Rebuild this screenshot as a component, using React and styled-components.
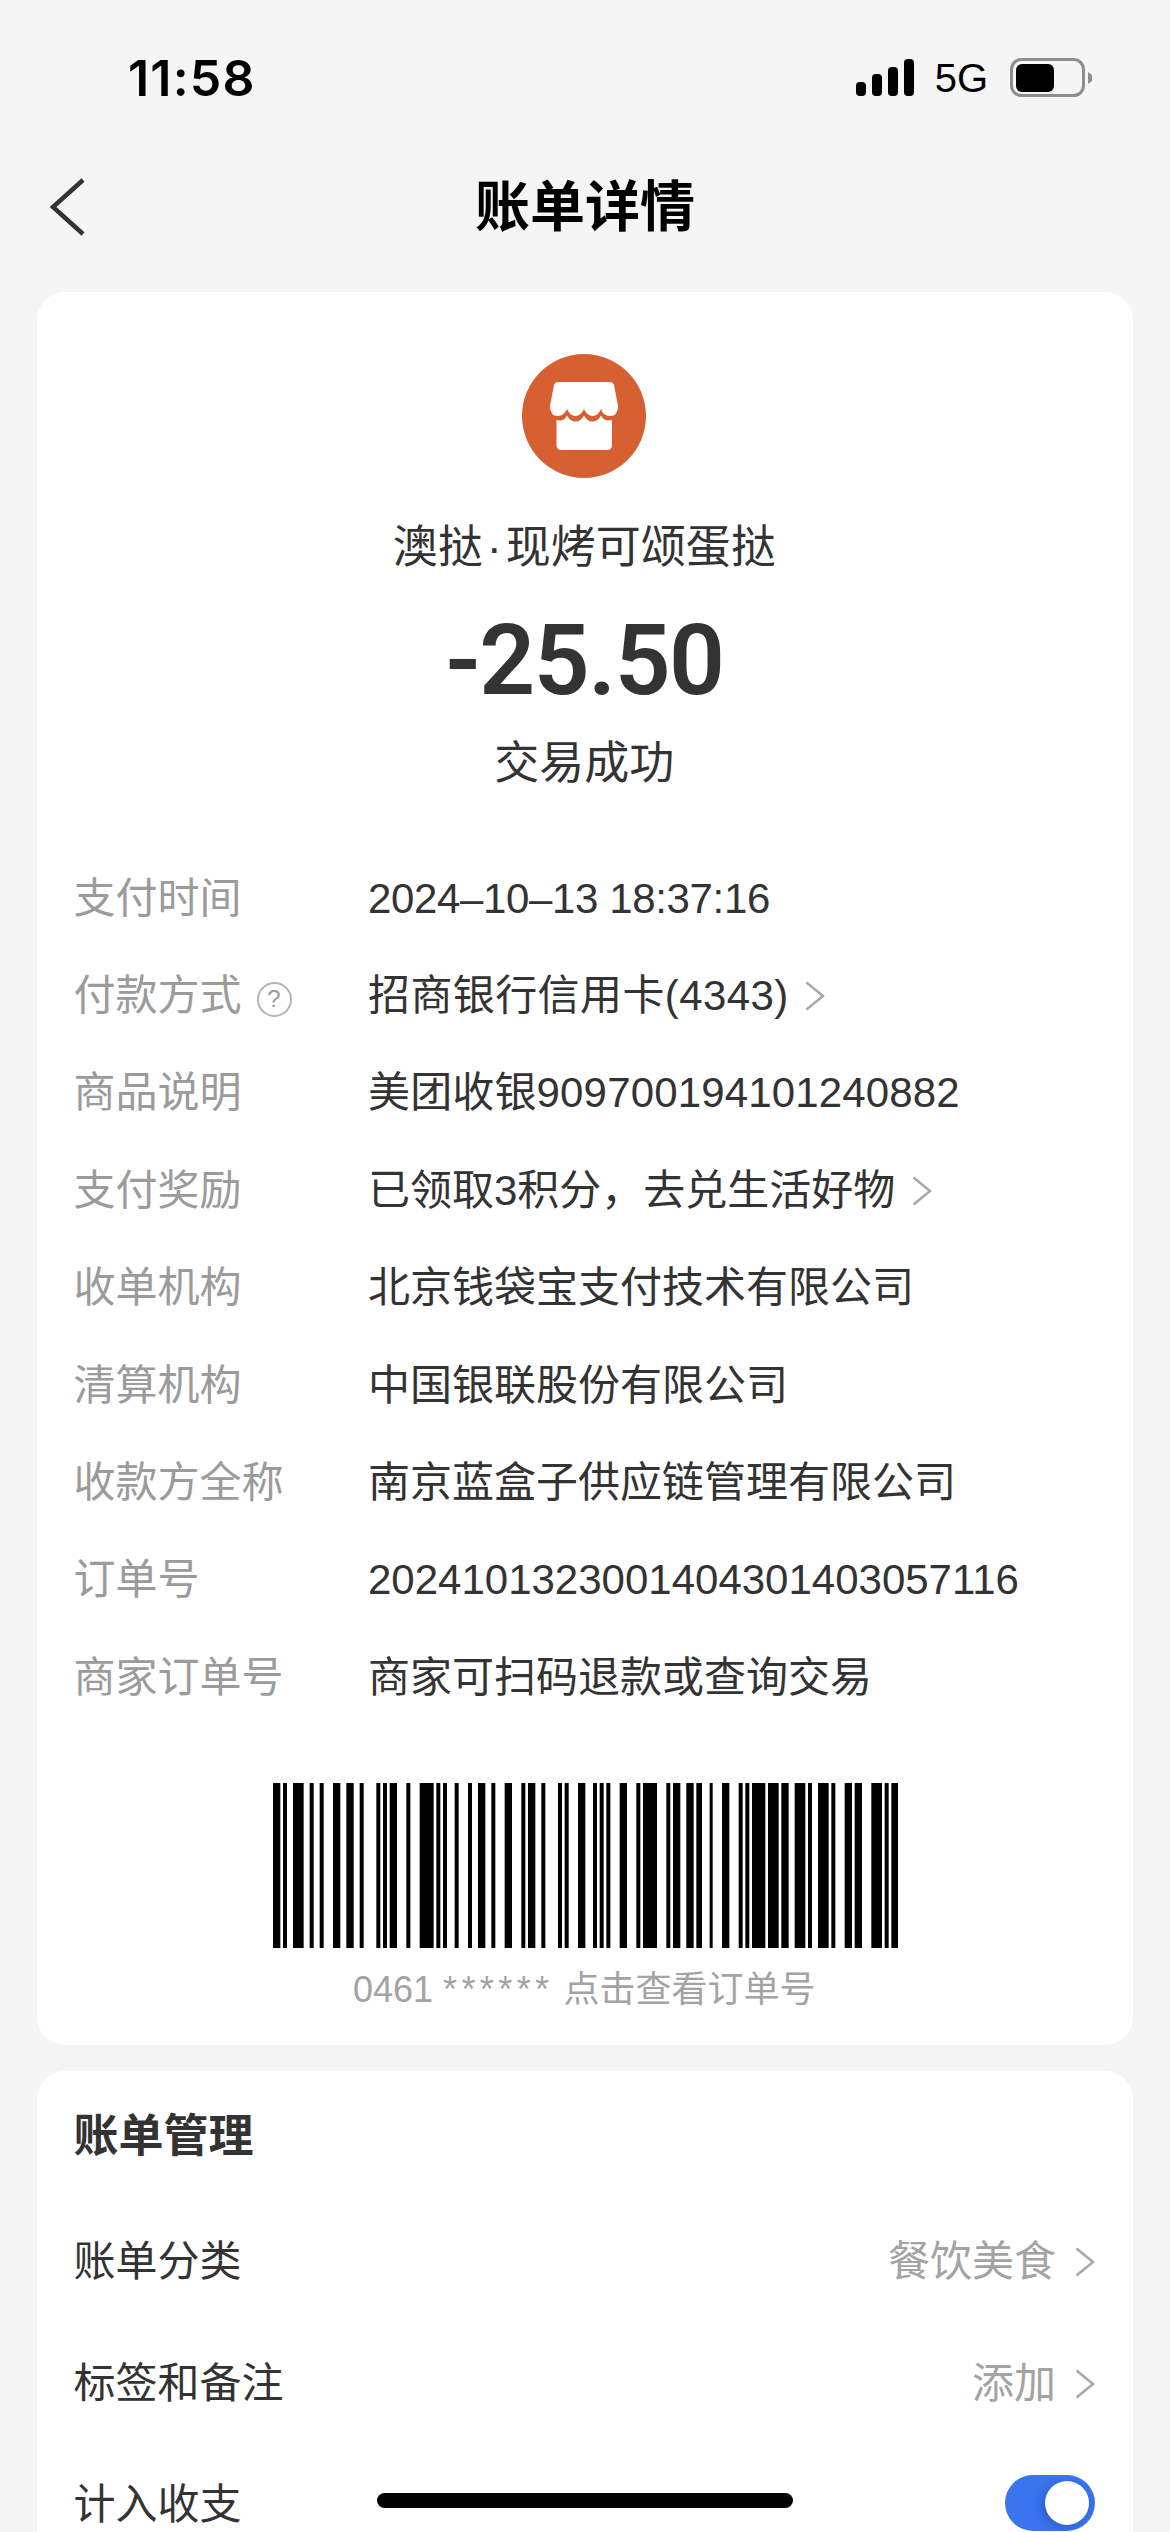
import React from "react";
import styled, { createGlobalStyle } from "styled-components";

const SANS = `"Liberation Sans", "Noto Sans CJK SC", sans-serif`;

const Global = createGlobalStyle`
  html, body { margin: 0; padding: 0; background: #f5f5f5; }
  body { font-family: ${SANS}; }
`;

const Page = styled.div`
  position: relative;
  width: 1170px;
  height: 2532px;
  overflow: hidden;
  background: #f5f5f5;
`;

const StatusBar = styled.div`
  display: flex;
  align-items: center;
  justify-content: space-between;
  height: 156px;
  padding: 0 77px 0 128px;
  box-sizing: border-box;
`;

const Clock = styled.span`
  font-family: Inter, sans-serif;
  font-size: 50px;
  font-weight: 600;
  letter-spacing: 1.2px;
  color: #000;
`;

const StatusIcons = styled.div`
  display: flex;
  align-items: center;
`;

const Signal = styled.svg`
  display: block;
  width: 58px;
  height: 38px;
`;

const Network = styled.span`
  margin: 0 22px 0 21px;
  font-size: 40px;
  line-height: 40px;
  color: #000;
`;

const BatteryIcon = styled.svg`
  display: block;
  width: 83px;
  height: 40px;
`;

const NavBar = styled.div`
  display: grid;
  grid-template-columns: 1fr auto 1fr;
  align-items: center;
  height: 102px;
  padding: 0 49px;
`;

const BackIcon = styled.svg`
  display: block;
  width: 37px;
  height: 60px;
`;

const Title = styled.h1`
  margin: 0;
  font-size: 55px;
  line-height: 70px;
  font-weight: 700;
  color: #000;
`;

const Card = styled.section`
  margin: ${(p) => p.$top}px 37px 0;
  padding: ${(p) => p.$padTop}px 38px ${(p) => p.$padBottom}px 36.5px;
  background: #fff;
  border-radius: 28px;
`;

const Hero = styled.div`
  display: flex;
  flex-direction: column;
  align-items: center;
`;

const Avatar = styled.div`
  display: flex;
  align-items: center;
  justify-content: center;
  width: 124px;
  height: 124px;
  border-radius: 50%;
  background: #d66031;
`;

const StoreIcon = styled.svg`
  display: block;
  width: 68px;
  height: 68px;
`;

const Merchant = styled.div`
  margin-top: 40px;
  font-size: 45px;
  line-height: 60px;
  color: #333;
`;

const Dot = styled.span`
  margin: 0 4px;
`;

const Amount = styled.div`
  margin-top: 28px;
  font-family: Roboto, sans-serif;
  font-weight: 600;
  font-size: 98px;
  letter-spacing: -1.5px;
  line-height: 110px;
  color: #333;
`;

const Outcome = styled.div`
  margin-top: 18px;
  font-size: 45px;
  line-height: 60px;
  color: #333;
`;

const Details = styled.div`
  margin-top: 56px;
`;

const DetailRow = styled.div`
  display: grid;
  grid-template-columns: 294.5px 1fr;
  align-items: center;
  height: 97.4px;
  font-size: 42px;
  line-height: 50px;
`;

const Label = styled.div`
  display: flex;
  align-items: center;
  color: #9b9b9b;
`;

const Value = styled.div`
  display: flex;
  align-items: center;
  color: #333;
  white-space: nowrap;
  letter-spacing: ${(p) => p.$track || 0}px;
`;

const Hint = styled.span`
  display: flex;
  align-items: center;
  justify-content: center;
  width: 35px;
  height: 35px;
  margin: 6px 0 0 15px;
  box-sizing: border-box;
  border: 2.5px solid #b4b4b4;
  border-radius: 50%;
  font-size: 24px;
  line-height: 28px;
  color: #9b9b9b;
`;

const Chevron = styled.svg`
  display: block;
  flex: none;
  width: 20px;
  height: 30px;
  margin-left: ${(p) => p.$gap}px;
`;

const Barcode = styled.svg`
  display: block;
  width: 628px;
  height: 165px;
  margin: 56px auto 0;
`;

const Caption = styled.div`
  margin-top: 17px;
  text-align: center;
  font-size: 36px;
  line-height: 50px;
  color: #a3a3a3;
`;

const Stars = styled.span`
  letter-spacing: 4.4px;
`;

const SectionTitle = styled.h2`
  margin: 0 0 35px;
  font-size: 45px;
  line-height: 60px;
  font-weight: 700;
  color: #333;
`;

const ManageRow = styled.div`
  display: flex;
  align-items: center;
  justify-content: space-between;
  height: 121.5px;
  font-size: 42px;
  line-height: 50px;
  color: #333;
`;

const ManageValue = styled.div`
  display: flex;
  align-items: center;
  color: #a3a3a3;
`;

const Toggle = styled.div`
  position: relative;
  width: 90px;
  height: 56px;
  margin-top: -4px;
  border-radius: 28px;
  background: #3a74ee;
  &::after {
    content: "";
    position: absolute;
    top: 6px;
    right: 6px;
    width: 44px;
    height: 44px;
    border-radius: 50%;
    background: #fff;
    box-shadow: -3px 2px 8px rgba(20, 50, 120, 0.35);
  }
`;

const HomeIndicator = styled.div`
  position: absolute;
  left: 377px;
  top: 2493px;
  width: 416px;
  height: 15px;
  border-radius: 8px;
  background: #000;
`;

const BARS = [
  [10, 30], [40, 50], [70, 100], [120, 130], [150, 160], [190, 210], [230, 250], [270, 280],
  [320, 330], [340, 350], [360, 380], [410, 420], [450, 490], [500, 510], [520, 530], [555, 565],
  [595, 605], [625, 645], [665, 675], [705, 725], [755, 765], [775, 795], [815, 825], [865, 875],
  [885, 895], [925, 945], [970, 980], [990, 1000], [1010, 1020], [1050, 1070], [1100, 1110],
  [1120, 1160], [1190, 1200], [1210, 1230], [1250, 1270], [1280, 1295], [1320, 1327], [1357, 1377],
  [1407, 1417], [1427, 1437], [1447, 1485], [1495, 1525], [1535, 1555], [1575, 1605], [1615, 1625],
  [1645, 1675], [1685, 1695], [1725, 1745], [1755, 1775], [1805, 1835], [1845, 1855], [1865, 1885],
];

const DETAILS = [
  { label: "支付时间", value: "2024–10–13 18:37:16", track: -0.36 },
  { label: "付款方式", value: "招商银行信用卡(4343)", hint: true, gap: 16, track: 0.4 },
  { label: "商品说明", value: "美团收银909700194101240882", track: 0.15 },
  { label: "支付奖励", value: "已领取3积分，去兑生活好物", gap: 17 },
  { label: "收单机构", value: "北京钱袋宝支付技术有限公司" },
  { label: "清算机构", value: "中国银联股份有限公司" },
  { label: "收款方全称", value: "南京蓝盒子供应链管理有限公司" },
  { label: "订单号", value: "2024101323001404301403057116" },
  { label: "商家订单号", value: "商家可扫码退款或查询交易" },
];

const RowChevron = ({ gap }) => (
  <Chevron $gap={gap} viewBox="0 0 20 30" fill="none" stroke="#a9a9a9" strokeWidth="2.6">
    <path d="M1.5 1.5 L18 15 L1.5 28.5" />
  </Chevron>
);

export default function App() {
  return (
    <Page>
      <Global />
      <StatusBar>
        <Clock>11:58</Clock>
        <StatusIcons>
          <Signal viewBox="0 0 58 38" fill="#000">
            <rect x="0" y="23" width="10" height="14" rx="4" />
            <rect x="16" y="15" width="10" height="22" rx="4" />
            <rect x="32" y="8" width="10" height="29" rx="4" />
            <rect x="48" y="0" width="10" height="37" rx="4" />
          </Signal>
          <Network>5G</Network>
          <BatteryIcon viewBox="0 0 83 40">
            <rect x="1.5" y="1.5" width="72" height="36" rx="10" fill="none" stroke="#8e8e8e" strokeWidth="3" />
            <rect x="6" y="6" width="38" height="28" rx="6" fill="#000" />
            <path d="M78 14 L82 17 V23 L78 26 Z" fill="#8e8e8e" />
          </BatteryIcon>
        </StatusIcons>
      </StatusBar>

      <NavBar>
        <BackIcon viewBox="0 0 37 60" fill="none" stroke="#333" strokeWidth="4.5">
          <path d="M34 3 L4 30 L34 57" />
        </BackIcon>
        <Title>账单详情</Title>
      </NavBar>

      <Card $top={34} $padTop={62} $padBottom={30}>
        <Hero>
          <Avatar>
            <StoreIcon viewBox="0 0 68 68" fill="#fff">
              <path d="M8 0 H60 Q63 0 64 3 L68 24 Q68 34 60 34 Q53 34 51 27 Q48 34 42.5 34 Q37 34 34 27 Q31 34 25.5 34 Q20 34 17 27 Q14 34 8 34 Q0 34 0 24 L4 3 Q5 0 8 0 Z" />
              <path d="M6.5 38 Q14 40 17 33.5 Q20 39.5 25.5 39.5 Q31 39.5 34 33.5 Q37 39.5 42.5 39.5 Q48 39.5 51 33.5 Q54 40 62 38 V63 Q62 68 57 68 H11.5 Q6.5 68 6.5 63 Z" />
            </StoreIcon>
          </Avatar>
          <Merchant>
            澳挞<Dot>·</Dot>现烤可颂蛋挞
          </Merchant>
          <Amount>-25.50</Amount>
          <Outcome>交易成功</Outcome>
        </Hero>

        <Details>
          {DETAILS.map((d) => (
            <DetailRow key={d.label}>
              <Label>
                {d.label}
                {d.hint && <Hint>?</Hint>}
              </Label>
              <Value $track={d.track}>
                {d.value}
                {d.gap && <RowChevron gap={d.gap} />}
              </Value>
            </DetailRow>
          ))}
        </Details>

        <Barcode viewBox="0 0 1884 495" preserveAspectRatio="none" fill="#000">
          {BARS.map(([a, b]) => (
            <rect key={a} x={a - 1} y="0" width={b - a + 2} height="495" />
          ))}
        </Barcode>
        <Caption>
          0461 <Stars>******</Stars> 点击查看订单号
        </Caption>
      </Card>

      <Card $top={26} $padTop={36} $padBottom={40}>
        <SectionTitle>账单管理</SectionTitle>
        <ManageRow>
          账单分类
          <ManageValue>
            餐饮美食
            <RowChevron gap={19} />
          </ManageValue>
        </ManageRow>
        <ManageRow>
          标签和备注
          <ManageValue>
            添加
            <RowChevron gap={19} />
          </ManageValue>
        </ManageRow>
        <ManageRow>
          计入收支
          <Toggle />
        </ManageRow>
      </Card>

      <HomeIndicator />
    </Page>
  );
}
